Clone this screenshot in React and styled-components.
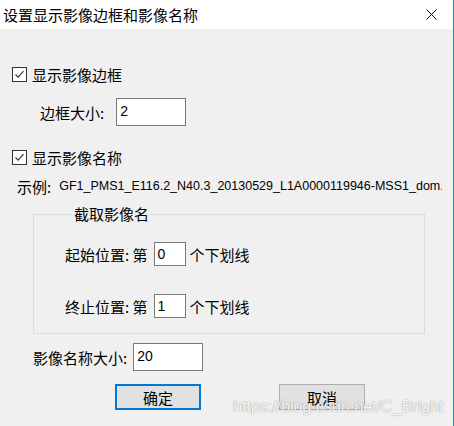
import styled, { createGlobalStyle } from "styled-components";

const GlobalStyle = createGlobalStyle`
  html, body {
    margin: 0;
    padding: 0;
    background: #f0f0f0;
  }
  body {
    font-family: "Noto Sans CJK SC", "Liberation Sans", sans-serif;
    color: #000;
  }
`;

const Window = styled.div`
  position: relative;
  width: 453px;
  height: 426px;
  background: #f0f0f0;
  border-right: 1px solid #2b7bd4;
  overflow: hidden;
  font-size: 15px;
`;

const TitleBar = styled.div`
  height: 29px;
  background: #fff;
  display: flex;
  align-items: center;
  justify-content: space-between;
  padding: 0 16px 0 3px;
  font-size: 15px;
  line-height: 1;
`;

const Body = styled.div`
  display: flex;
  flex-direction: column;
  padding-top: 37px;
`;

const Row = styled.div`
  display: flex;
  align-items: center;
  height: ${(p) => p.$h || 16}px;
  margin-top: ${(p) => p.$mt || 0}px;
  padding-left: ${(p) => p.$pl || 0}px;
  line-height: 1;
  white-space: nowrap;
`;

const Box = styled.span`
  width: 13px;
  height: 13px;
  border: 1px solid #333;
  background: #fff;
  display: flex;
  align-items: center;
  justify-content: center;
  margin-right: 5px;
`;

const Label = styled.span`
  margin-right: ${(p) => p.$mr || 0}px;
`;

const Field = styled.div`
  width: ${(p) => p.$w}px;
  height: ${(p) => p.$h}px;
  box-sizing: border-box;
  border: 1px solid #7a7a7a;
  background: #fff;
  display: flex;
  align-items: ${(p) => (p.$tall ? "flex-start" : "center")};
  padding: ${(p) => (p.$tall ? "5px 3px 0" : "0 3px")};
  font-family: "Liberation Sans", sans-serif;
  font-size: 14px;
  margin-right: ${(p) => p.$mr || 0}px;
`;

const Example = styled.span`
  font-family: "Liberation Sans", sans-serif;
  font-size: 12.5px;
  line-height: 18px;
  height: 18px;
  width: 383px;
  overflow: hidden;
  margin-left: 8px;
`;

const Group = styled.fieldset`
  margin: 10px 0 0 33px;
  width: 392px;
  box-sizing: border-box;
  padding: 0 0 15px 31px;
  border: 1px solid #dcdcdc;
  display: flex;
  flex-direction: column;
`;

const Legend = styled.legend`
  margin-left: 7px;
  padding: 0 2px;
  height: 20px;
  line-height: 20px;
  font-size: 15px;
`;

const Buttons = styled.div`
  display: flex;
  margin-top: 13px;
  padding-left: 115px;
  gap: 78px;
`;

const Button = styled.div`
  width: 86px;
  height: 26px;
  box-sizing: border-box;
  background: #e1e1e1;
  border: ${(p) => (p.$primary ? "2px solid #0078d7" : "1px solid #adadad")};
  display: flex;
  align-items: center;
  justify-content: center;
  font-size: 15px;
`;

const Watermark = styled.div`
  position: absolute;
  left: 233px;
  top: 397px;
  font-family: "Liberation Sans", sans-serif;
  font-size: 16.5px;
  letter-spacing: -0.2px;
  color: rgba(255, 255, 255, 0.92);
  text-shadow: 0 0 1px rgba(0, 0, 0, 0.35), 0 0 2px rgba(0, 0, 0, 0.15);
  pointer-events: none;
`;

const Check = () => (
  <Box>
    <svg width="11" height="11" viewBox="0 0 11 11">
      <path d="M1.5 5.5 L4.2 8.2 L9.5 2.2" fill="none" stroke="#333" strokeWidth="1.2" />
    </svg>
  </Box>
);

const Close = () => (
  <svg width="11" height="11" viewBox="0 0 11 11">
    <path d="M0.5 0.5 L10.5 10.5 M10.5 0.5 L0.5 10.5" stroke="#000" strokeWidth="1" />
  </svg>
);

export default function App() {
  return (
    <>
      <GlobalStyle />
      <Window>
        <TitleBar>
          <span>设置显示影像边框和影像名称</span>
          <Close />
        </TitleBar>
        <Body>
          <Row $pl={12}>
            <Check />
            <span>显示影像边框</span>
          </Row>
          <Row $h={28} $mt={16} $pl={40}>
            <Label $mr={12}>边框大小:</Label>
            <Field $w={70} $h={28} $tall>2</Field>
          </Row>
          <Row $mt={23} $pl={12}>
            <Check />
            <span>显示影像名称</span>
          </Row>
          <Row $mt={13} $pl={17}>
            <span>示例:</span>
            <Example>GF1_PMS1_E116.2_N40.3_20130529_L1A0000119946-MSS1_dom.tif</Example>
          </Row>
          <Group>
            <Legend>截取影像名</Legend>
            <Row $h={24} $mt={18}>
              <Label $mr={6}>起始位置: 第</Label>
              <Field $w={32} $h={24} $mr={4}>0</Field>
              <span>个下划线</span>
            </Row>
            <Row $h={24} $mt={28}>
              <Label $mr={6}>终止位置: 第</Label>
              <Field $w={32} $h={24} $mr={4}>1</Field>
              <span>个下划线</span>
            </Row>
          </Group>
          <Row $h={28} $mt={9} $pl={33}>
            <Label $mr={6}>影像名称大小:</Label>
            <Field $w={70} $h={28} $tall>20</Field>
          </Row>
          <Buttons>
            <Button $primary>确定</Button>
            <Button>取消</Button>
          </Buttons>
        </Body>
        <Watermark>https://blog.csdn.net/C_Bright</Watermark>
      </Window>
    </>
  );
}
